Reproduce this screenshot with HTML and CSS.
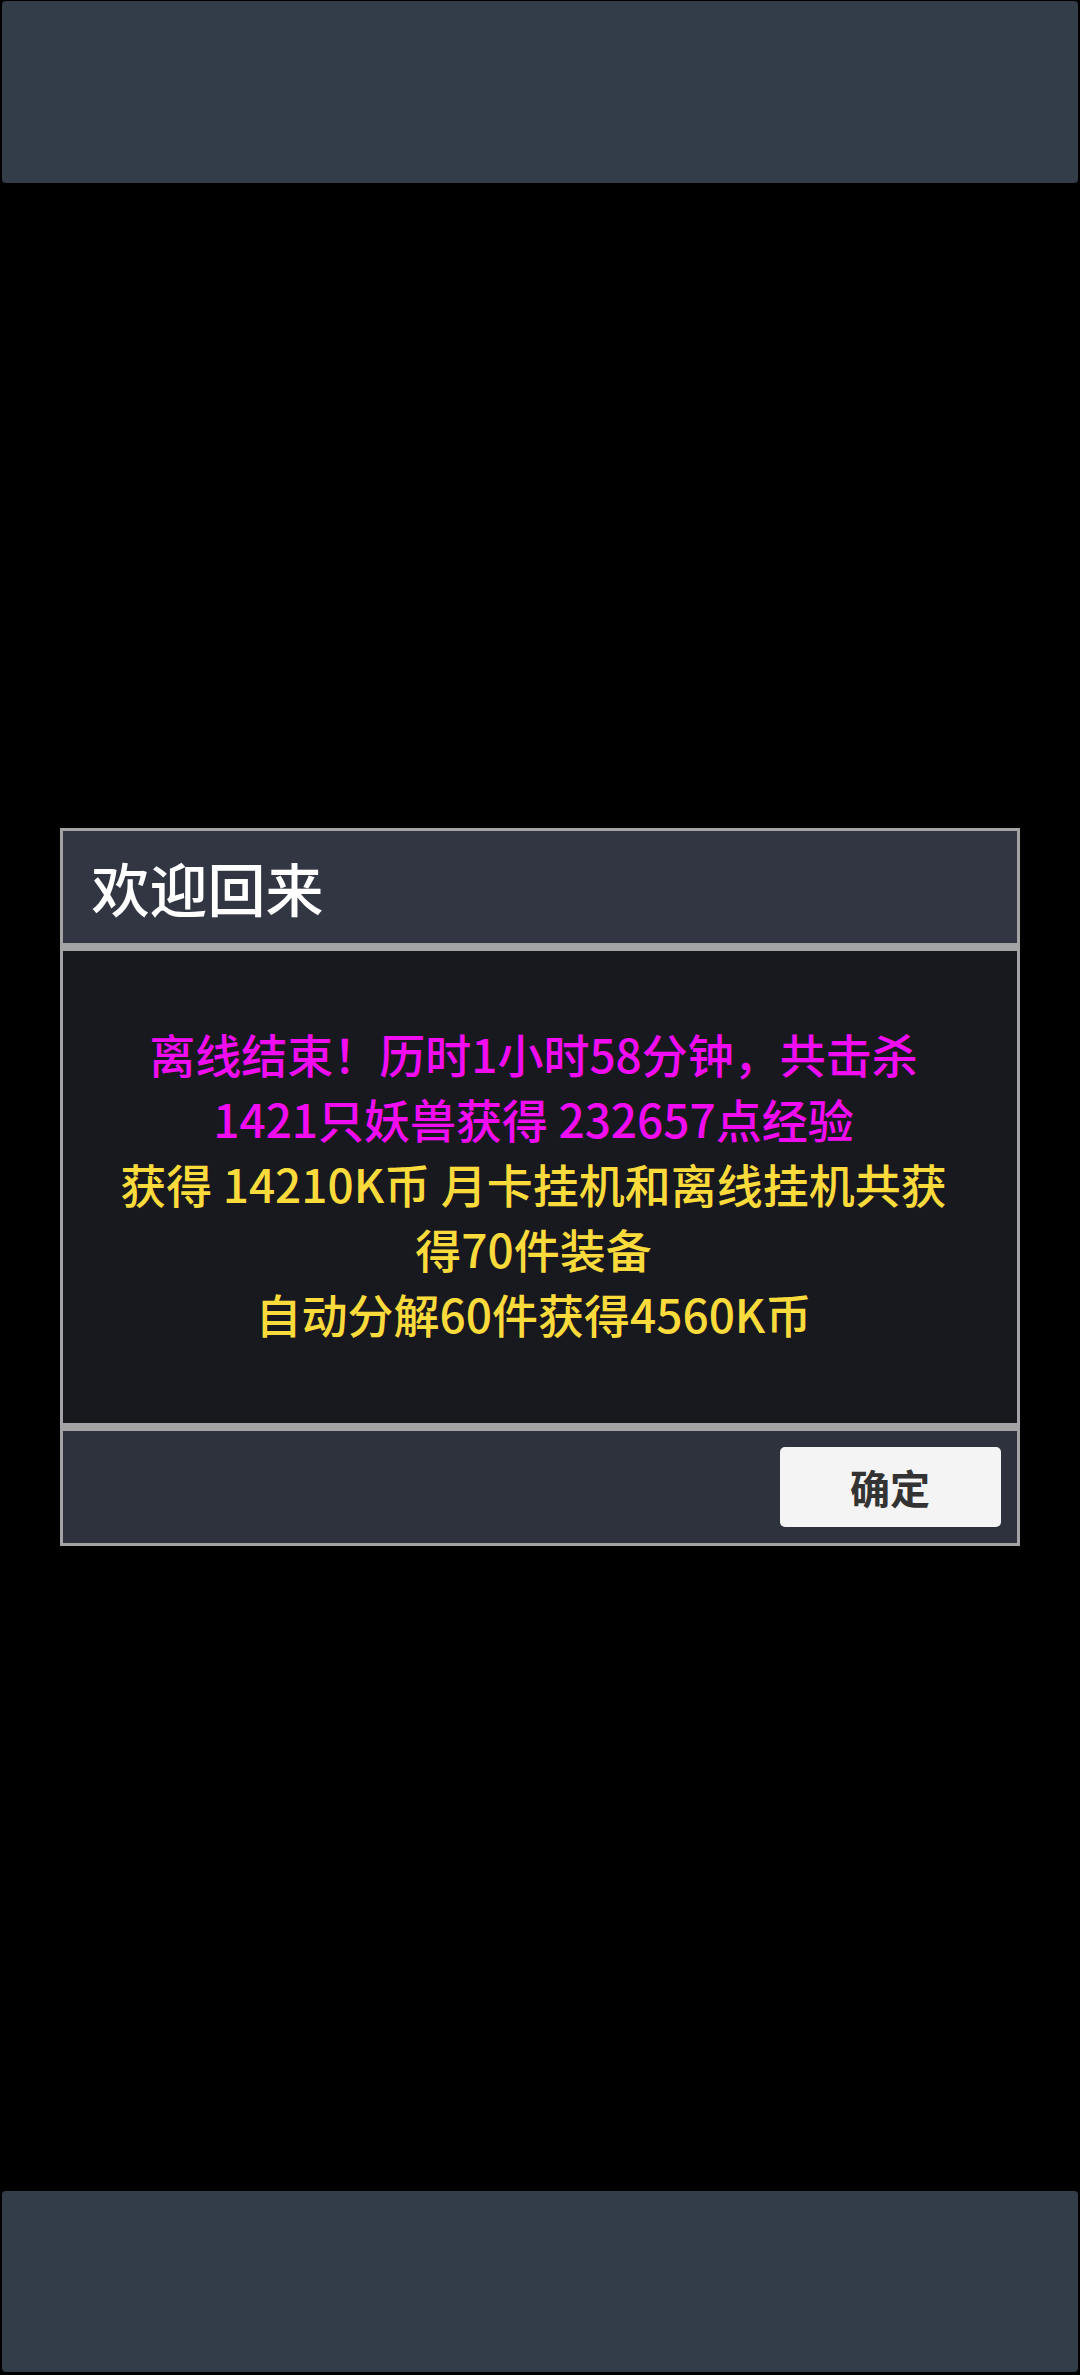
FILE: index.html
```html
<!DOCTYPE html>
<html lang="zh-CN">
<head>
<meta charset="utf-8">
<title>欢迎回来</title>
<link rel="stylesheet" href="styles.css">
</head>
<body>
<div class="screen">
  <div class="bar bar-top"></div>
  <div class="middle">
    <div class="dialog">
      <div class="dlg-header">
        <div class="dlg-title">欢迎回来</div>
      </div>
      <div class="dlg-body">
        <div class="msg">
          <div class="line magenta">离线结束！历时1小时58分钟，共击杀</div>
          <div class="line magenta">1421只妖兽获得 232657点经验</div>
          <div class="line yellow">获得 14210K币 月卡挂机和离线挂机共获</div>
          <div class="line yellow">得70件装备</div>
          <div class="line yellow">自动分解60件获得4560K币</div>
        </div>
      </div>
      <div class="dlg-footer">
        <button class="btn-ok">确定</button>
      </div>
    </div>
  </div>
  <div class="bar bar-bottom"></div>
</div>
</body>
</html>
```

FILE: styles.css
```css
html, body {
  margin: 0;
  padding: 0;
  background: #000;
}
body {
  font-family: "Noto Sans CJK SC", "Noto Sans", sans-serif;
}
.screen {
  width: 1080px;
  height: 2375px;
  display: flex;
  flex-direction: column;
  background: #000;
}
.bar {
  background: #333d4a;
  margin: 0 2px;
  border-radius: 4px;
  flex: none;
}
.bar-top {
  height: 182px;
  margin-top: 1px;
}
.bar-bottom {
  height: 181px;
  margin-bottom: 3px;
}
.middle {
  flex: 1;
  display: flex;
  align-items: center;
  justify-content: center;
}
.dialog {
  width: 954px;
  margin-left: -1px;
  background: #a3a3a6;
  padding: 3px;
  display: flex;
  flex-direction: column;
  gap: 8px;
}
.dlg-header {
  height: 112px;
  background: #323643;
  display: flex;
  align-items: center;
  padding-left: 29px;
}
.dlg-title {
  color: #fff;
  font-size: 58px;
  line-height: 1;
  font-weight: 500;
}
.dlg-body {
  height: 472px;
  box-sizing: border-box;
  background: #18191e;
  display: flex;
  align-items: center;
  justify-content: center;
  padding-right: 12px;
  padding-bottom: 8px;
}
.msg {
  display: flex;
  flex-direction: column;
  align-items: center;
}
.line {
  font-size: 46px;
  line-height: 65px;
  font-weight: 500;
  white-space: nowrap;
}
.magenta {
  color: #f20cf2;
}
.yellow {
  color: #fbdb3c;
}
.dlg-footer {
  height: 112px;
  background: #2e323d;
  display: flex;
  align-items: center;
  justify-content: flex-end;
  padding-right: 16px;
}
.btn-ok {
  width: 221px;
  height: 80px;
  border: none;
  border-radius: 5px;
  background: #f4f4f4;
  color: #333;
  font-family: "Noto Sans CJK SC", "Noto Sans", sans-serif;
  font-size: 40px;
  font-weight: 700;
  padding: 0;
}
```
